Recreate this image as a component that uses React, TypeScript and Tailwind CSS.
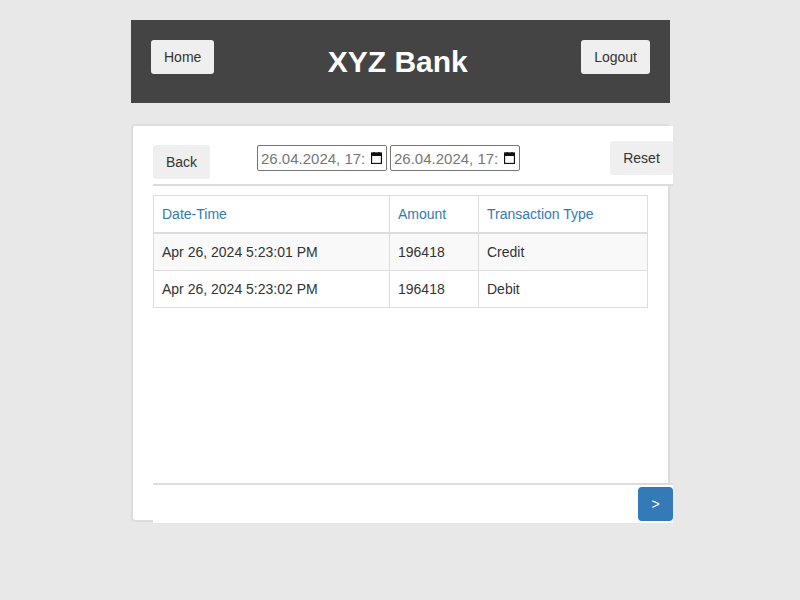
import React from "react";

const rows = [
    { date: "Apr 26, 2024 5:23:01 PM", amount: "196418", type: "Credit" },
    { date: "Apr 26, 2024 5:23:02 PM", amount: "196418", type: "Debit" },
];

function CalendarIcon() {
    return (
        <svg width="11" height="12" viewBox="0 0 11 12" className="shrink-0">
            <rect x="0.5" y="1" width="10" height="10.5" fill="none" stroke="#111" strokeWidth="1.3" />
            <rect x="0.5" y="1" width="10" height="3" fill="#111" />
            <rect x="2.5" y="0" width="1.3" height="2" fill="#111" />
            <rect x="7.2" y="0" width="1.3" height="2" fill="#111" />
        </svg>
    );
}

function DateField() {
    return (
        <div className="w-[130px] h-[26px] border border-[#767676] rounded-[2px] flex items-center pl-[3px] pr-[4px] bg-white overflow-hidden">
            <span className="text-[15px] text-[#777] whitespace-nowrap overflow-hidden flex-1 leading-none">26.04.2024, 17:</span>
            <CalendarIcon />
        </div>
    );
}

export default function App() {
    return (
        <div className="min-h-screen bg-[#e8e8e8] pt-[20px] font-['Liberation_Sans',Arial,sans-serif] text-[14px] text-[#333]">
            <div className="ml-[131px] w-[539px]">
                {/* Header */}
                <div className="h-[83px] bg-[#444444] px-[20px] pt-[20px] flex justify-between items-start">
                    <button className="h-[34px] px-[13px] bg-[#efefef] rounded-[3px] text-[14px] text-[#333]">Home</button>
                    <h1 className="mt-[5px] text-[30px] font-bold text-white leading-[33px]">XYZ Bank</h1>
                    <button className="h-[34px] px-[13px] bg-[#efefef] rounded-[3px] text-[14px] text-[#333]">Logout</button>
                </div>

                {/* Card */}
                <div className="mt-[21px] w-[539px] h-[398px] border-2 border-[#dddddd] rounded-[4px] bg-white pl-[20px]">
                    <div className="w-[520px] flex flex-col">
                        {/* Toolbar */}
                        <div className="h-[58px] bg-white flex items-start border-b-2 border-[#dddddd] box-content">
                            <button className="mt-[19px] h-[34px] w-[57px] bg-[#efefef] rounded-[3px] text-[14px] text-[#333]">Back</button>
                            <div className="mt-[19px] ml-[47px] flex gap-[3px]">
                                <DateField />
                                <DateField />
                            </div>
                            <button className="mt-[15px] ml-auto h-[34px] w-[63px] bg-[#efefef] rounded-[3px] text-[14px] text-[#333]">Reset</button>
                        </div>

                        {/* Body */}
                        <div className="h-[297px] pt-[9px]">
                            <table className="w-[494px] border-collapse border border-[#dddddd] table-fixed">
                                <colgroup>
                                    <col className="w-[236px]" />
                                    <col className="w-[89px]" />
                                    <col className="w-[169px]" />
                                </colgroup>
                                <thead>
                                    <tr className="border-b-2 border-[#dddddd]">
                                        <th className="text-left font-normal text-[#337ab7] px-[8px] py-[8px] leading-[20px] border border-[#dddddd] border-b-2">Date-Time</th>
                                        <th className="text-left font-normal text-[#337ab7] px-[8px] py-[8px] leading-[20px] border border-[#dddddd] border-b-2">Amount</th>
                                        <th className="text-left font-normal text-[#337ab7] px-[8px] py-[8px] leading-[20px] border border-[#dddddd] border-b-2">Transaction Type</th>
                                    </tr>
                                </thead>
                                <tbody>
                                    {rows.map((row, i) => (
                                        <tr key={i} className={i % 2 === 0 ? "bg-[#f9f9f9]" : "bg-white"}>
                                            <td className="px-[8px] py-[8px] leading-[20px] border border-[#dddddd]">{row.date}</td>
                                            <td className="px-[8px] py-[8px] leading-[20px] border border-[#dddddd]">{row.amount}</td>
                                            <td className="px-[8px] py-[8px] leading-[20px] border border-[#dddddd]">{row.type}</td>
                                        </tr>
                                    ))}
                                </tbody>
                            </table>
                        </div>

                        {/* Footer */}
                        <div className="h-[38px] bg-white border-t-2 border-[#dddddd] box-content flex justify-end items-start">
                            <button className="mt-[2px] h-[34px] w-[35px] bg-[#337ab7] rounded-[4px] text-white text-[14px]">&gt;</button>
                        </div>
                    </div>
                </div>
            </div>
        </div>
    );
}
